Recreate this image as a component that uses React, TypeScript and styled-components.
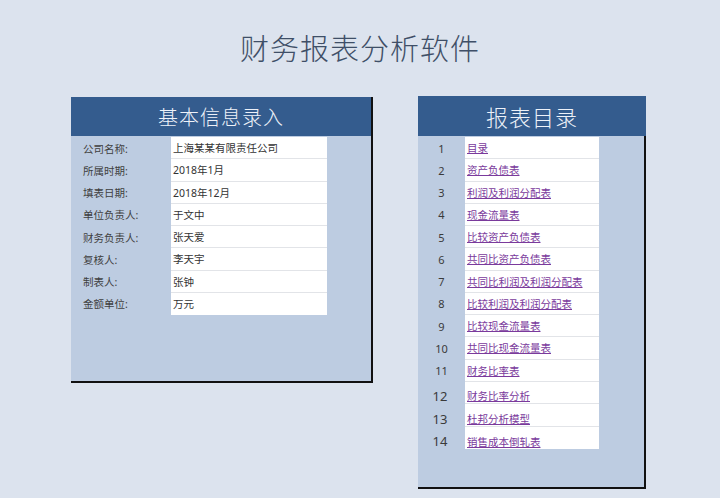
import React from "react";
import styled, { createGlobalStyle } from "styled-components";

const Global = createGlobalStyle`
  html, body { margin: 0; padding: 0; }
  body {
    background: #dce3ee;
    width: 720px;
    height: 498px;
    overflow: hidden;
    font-family: "Noto Sans", "Noto Sans CJK SC", sans-serif;
  }
`;

const Page = styled.div`
  width: 720px;
  height: 498px;
  background: #dce3ee;
`;

const Title = styled.h1`
  margin: 0;
  height: 96px;
  line-height: 94px;
  text-align: center;
  font-family: "Noto Sans CJK SC", sans-serif;
  font-weight: 300;
  font-size: 29px;
  letter-spacing: 1px;
  color: #3f4f67;
`;

const Columns = styled.div`
  display: flex;
  align-items: flex-start;
  gap: 45px;
  padding-left: 71px;
`;

const Panel = styled.section<{ $w: number; $h: number; $top: number }>`
  width: ${(p) => p.$w}px;
  height: ${(p) => p.$h}px;
  margin-top: ${(p) => p.$top}px;
  box-sizing: border-box;
  background: #bdcce1;
  border-right: 2px solid #111;
  border-bottom: 2px solid #111;
`;

const Header = styled.div<{ $size: number; $h: number; $over: boolean }>`
  height: ${(p) => p.$h}px;
  margin-right: ${(p) => (p.$over ? "-2px" : "0")};
  background: #345c8e;
  color: #eef2f9;
  font-family: "Noto Sans CJK SC", sans-serif;
  font-weight: 300;
  font-size: ${(p) => p.$size}px;
  display: flex;
  align-items: center;
  justify-content: center;
  letter-spacing: 1px;
`;

const Rows = styled.div`
  padding-top: 1px;
`;

const Row = styled.div<{ $cols: string; $tall?: boolean }>`
  display: grid;
  grid-template-columns: ${(p) => p.$cols};
  height: ${(p) => (p.$tall ? "22.5px" : "22.25px")};
  font-size: 10.5px;
`;

const Label = styled.div`
  padding-left: 12px;
  display: flex;
  align-items: center;
  color: #3f3f3f;
`;

const Num = styled.div<{ $big: boolean }>`
  display: flex;
  align-items: ${(p) => (p.$big ? "flex-end" : "center")};
  justify-content: center;
  box-sizing: border-box;
  padding-right: ${(p) => (p.$big ? "3px" : "0")};
  padding-bottom: ${(p) => (p.$big ? "1px" : "0")};
  line-height: ${(p) => (p.$big ? "14px" : "normal")};
  font-size: ${(p) => (p.$big ? 13 : 11)}px;
  color: #3a3a3a;
`;

const Cell = styled.div<{ $last: boolean; $low?: boolean }>`
  background: #fff;
  padding-left: 2px;
  display: flex;
  align-items: ${(p) => (p.$low ? "flex-end" : "center")};
  line-height: ${(p) => (p.$low ? "14px" : "normal")};
  box-sizing: border-box;
  border-bottom: ${(p) => (p.$last ? "none" : "1px solid #e2e4e8")};
  color: #333;
`;

const Link = styled.a`
  color: #7a3a9c;
  text-decoration: underline;
  text-underline-offset: 1px;
  cursor: pointer;
`;

const info: [string, string][] = [
  ["公司名称:", "上海某某有限责任公司"],
  ["所属时期:", "2018年1月"],
  ["填表日期:", "2018年12月"],
  ["单位负责人:", "于文中"],
  ["财务负责人:", "张天爱"],
  ["复核人:", "李天宇"],
  ["制表人:", "张钟"],
  ["金额单位:", "万元"],
];

const catalog = [
  "目录",
  "资产负债表",
  "利润及利润分配表",
  "现金流量表",
  "比较资产负债表",
  "共同比资产负债表",
  "共同比利润及利润分配表",
  "比较利润及利润分配表",
  "比较现金流量表",
  "共同比现金流量表",
  "财务比率表",
  "财务比率分析",
  "杜邦分析模型",
  "销售成本倒轧表",
];

export default function App() {
  return (
    <Page>
      <Global />
      <Title>财务报表分析软件</Title>
      <Columns>
        <Panel $w={302} $h={286} $top={1}>
          <Header $size={20} $h={39} $over={false}>
            基本信息录入
          </Header>
          <Rows>
            {info.map(([k, v], i) => (
              <Row key={k} $cols="100px 156px">
                <Label>{k}</Label>
                <Cell $last={i === info.length - 1}>{v}</Cell>
              </Row>
            ))}
          </Rows>
        </Panel>
        <Panel $w={228} $h={393} $top={0}>
          <Header $size={22} $h={40} $over={true}>
            报表目录
          </Header>
          <Rows>
            {catalog.map((name, i) => (
              <Row key={name} $cols="47px 134px" $tall={i >= 11}>
                <Num $big={i >= 11}>{i + 1}</Num>
                <Cell $last={i === catalog.length - 1} $low={i >= 11}>
                  <Link>{name}</Link>
                </Cell>
              </Row>
            ))}
          </Rows>
        </Panel>
      </Columns>
    </Page>
  );
}
